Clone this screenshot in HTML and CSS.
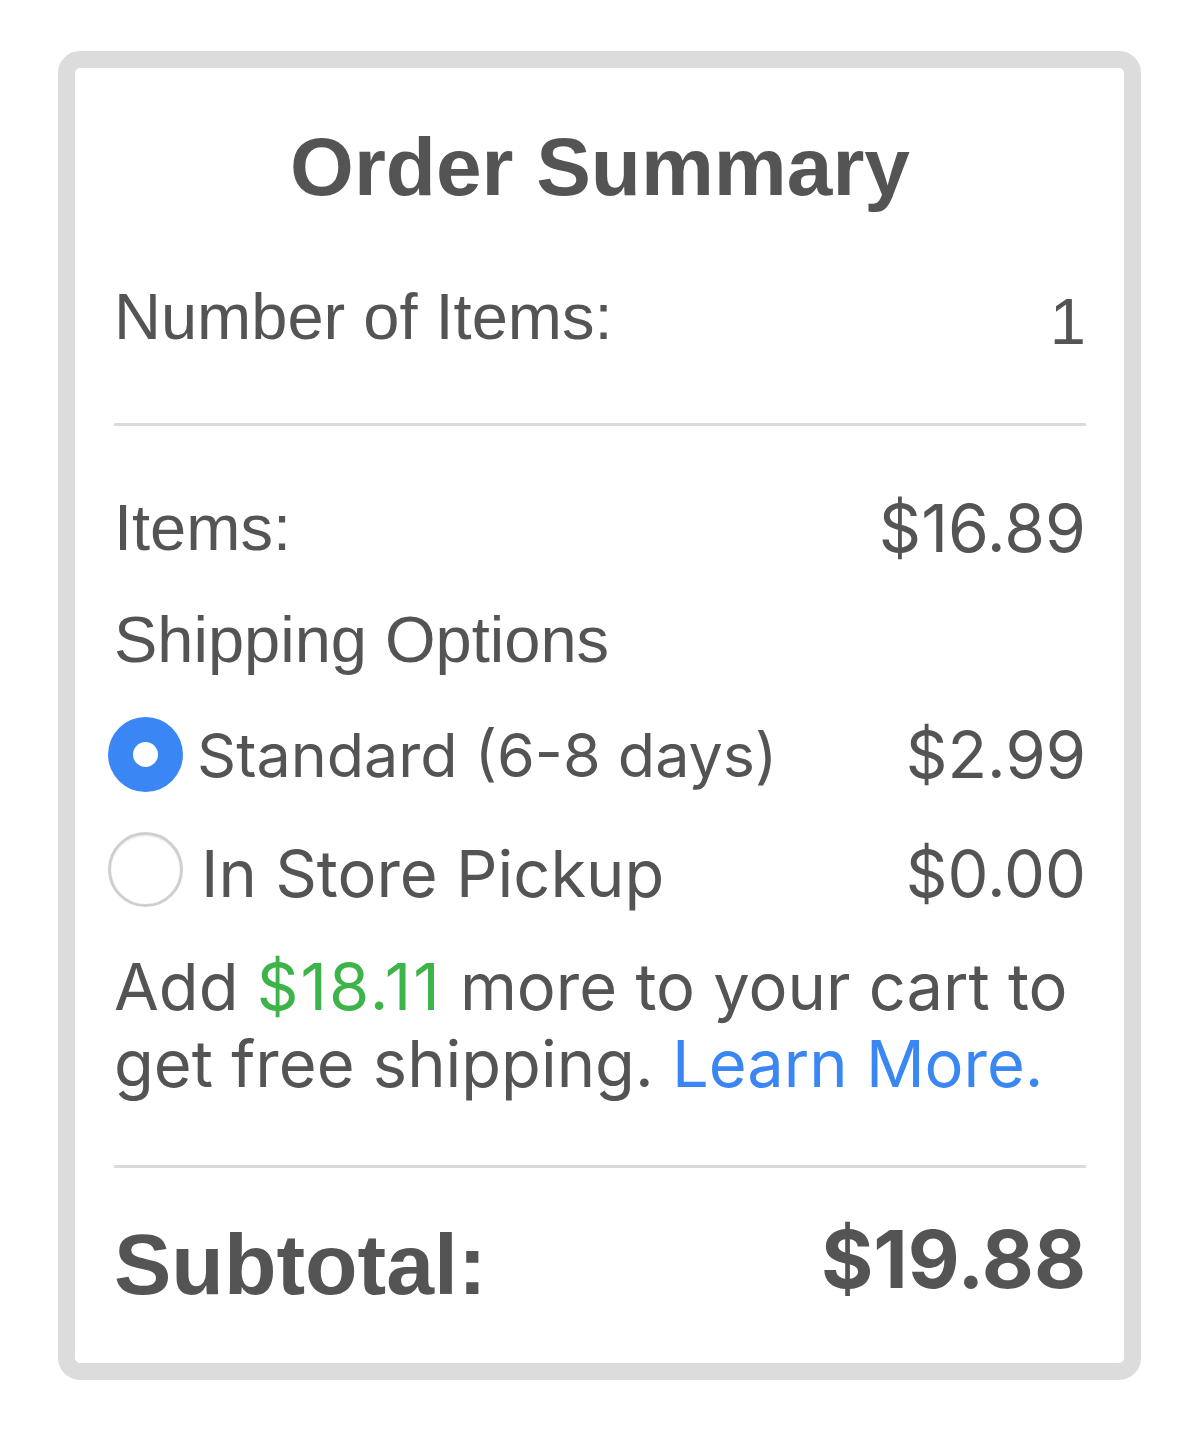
FILE: index.html
```html
<!DOCTYPE html>
<html lang="en">
<head>
<meta charset="utf-8">
<title>Order Summary</title>
<link rel="stylesheet" href="styles.css">
</head>
<body>
<section class="card">
  <h1 class="title">Order Summary</h1>
  <div class="row row-count">
    <span class="label">Number of Items:</span>
    <span class="count">1</span>
  </div>
  <hr class="divider divider-top">
  <div class="row row-items">
    <span class="label">Items:</span>
    <span class="price price-items">$16.89</span>
  </div>
  <div class="row row-ship-head">
    <span class="label">Shipping Options</span>
  </div>
  <label class="option option-standard">
    <span class="radio radio-on"></span>
    <span class="option-name">Standard (6-8 days)</span>
    <span class="price">$2.99</span>
  </label>
  <label class="option option-pickup">
    <span class="radio radio-off"></span>
    <span class="option-name">In Store Pickup</span>
    <span class="price">$0.00</span>
  </label>
  <p class="free-note">Add <span class="green">$18.11</span> more to your cart to get free shipping. <a class="learn" href="#">Learn More.</a></p>
  <hr class="divider divider-bottom">
  <div class="row row-subtotal">
    <span class="sub-label">Subtotal:</span>
    <span class="sub-value">$19.88</span>
  </div>
</section>
</body>
</html>
```

FILE: styles.css
```css
html, body {
  margin: 0;
  padding: 0;
  background: #ffffff;
}

body {
  padding: 51px 0 0 58px;
  color: #545454;
  font-family: "Liberation Sans", Arial, sans-serif;
}

.card {
  box-sizing: border-box;
  width: 1083px;
  border: 17px solid #dcdcdc;
  border-radius: 22px;
  background: #fff;
  padding: 49px 38px 43px 39px;
}

.title {
  margin: 0;
  text-align: center;
  font-family: "Liberation Sans", Arial, sans-serif;
  font-weight: 700;
  font-size: 82px;
  line-height: 100px;
  color: #545454;
}

.row {
  display: flex;
  justify-content: space-between;
  align-items: flex-start;
}

.label {
  font-size: 65px;
  line-height: 110px;
}

.row-count {
  margin-top: 45px;
}

.count {
  font-size: 65px;
  line-height: 110px;
  padding-top: 5px;
}

.divider {
  border: 0;
  height: 3px;
  background: #dadada;
  margin: 0;
}

.divider-top {
  margin-top: 46px;
}

.row-items {
  margin-top: 47px;
}

.row-ship-head {
  margin-top: 2px;
}

.price {
  font-family: "Inter", "Noto Sans", sans-serif;
  font-size: 65px;
  line-height: 110px;
}

.price-items {
  font-size: 66px;
}

.option {
  display: flex;
  align-items: center;
  cursor: pointer;
}

.option-standard {
  height: 119px;
}

.option-pickup {
  height: 110px;
}

.radio {
  box-sizing: border-box;
  width: 75px;
  height: 75px;
  border-radius: 50%;
  flex: none;
  margin-left: -6px;
}

.radio-on {
  background: #3a86f4;
  display: flex;
  align-items: center;
  justify-content: center;
}

.radio-on::after {
  content: "";
  width: 25px;
  height: 25px;
  border-radius: 50%;
  background: #fff;
}

.radio-off {
  border: 3px solid #cfcfcf;
  background: #fff;
  box-shadow: inset 0 1px 2px rgba(0,0,0,0.08);
}

.option-name {
  flex: 1;
  font-family: "Inter", "Noto Sans", sans-serif;
  font-size: 61px;
  line-height: 110px;
  margin-left: 14px;
}

.option-pickup .option-name {
  font-size: 65px;
  margin-left: 18px;
}

.option .price {
  line-height: 110px;
}

.option-pickup .option-name,
.option-pickup .price {
  padding-top: 10px;
}

.free-note {
  margin: 24px 0 0;
  font-family: "Inter", "Noto Sans", sans-serif;
  font-size: 65px;
  line-height: 77px;
}

.green {
  color: #3cb44a;
  letter-spacing: 2px;
}

.learn {
  color: #3a86f2;
  text-decoration: none;
}

.divider-bottom {
  margin-top: 63px;
}

.row-subtotal {
  margin-top: 41px;
  align-items: baseline;
}

.sub-label {
  font-family: "Liberation Sans", Arial, sans-serif;
  font-weight: 700;
  font-size: 86px;
  line-height: 110px;
}

.sub-value {
  font-family: "Inter", "Noto Sans", sans-serif;
  font-weight: 700;
  font-size: 80px;
  line-height: 110px;
  position: relative;
  top: -6px;
}
```
